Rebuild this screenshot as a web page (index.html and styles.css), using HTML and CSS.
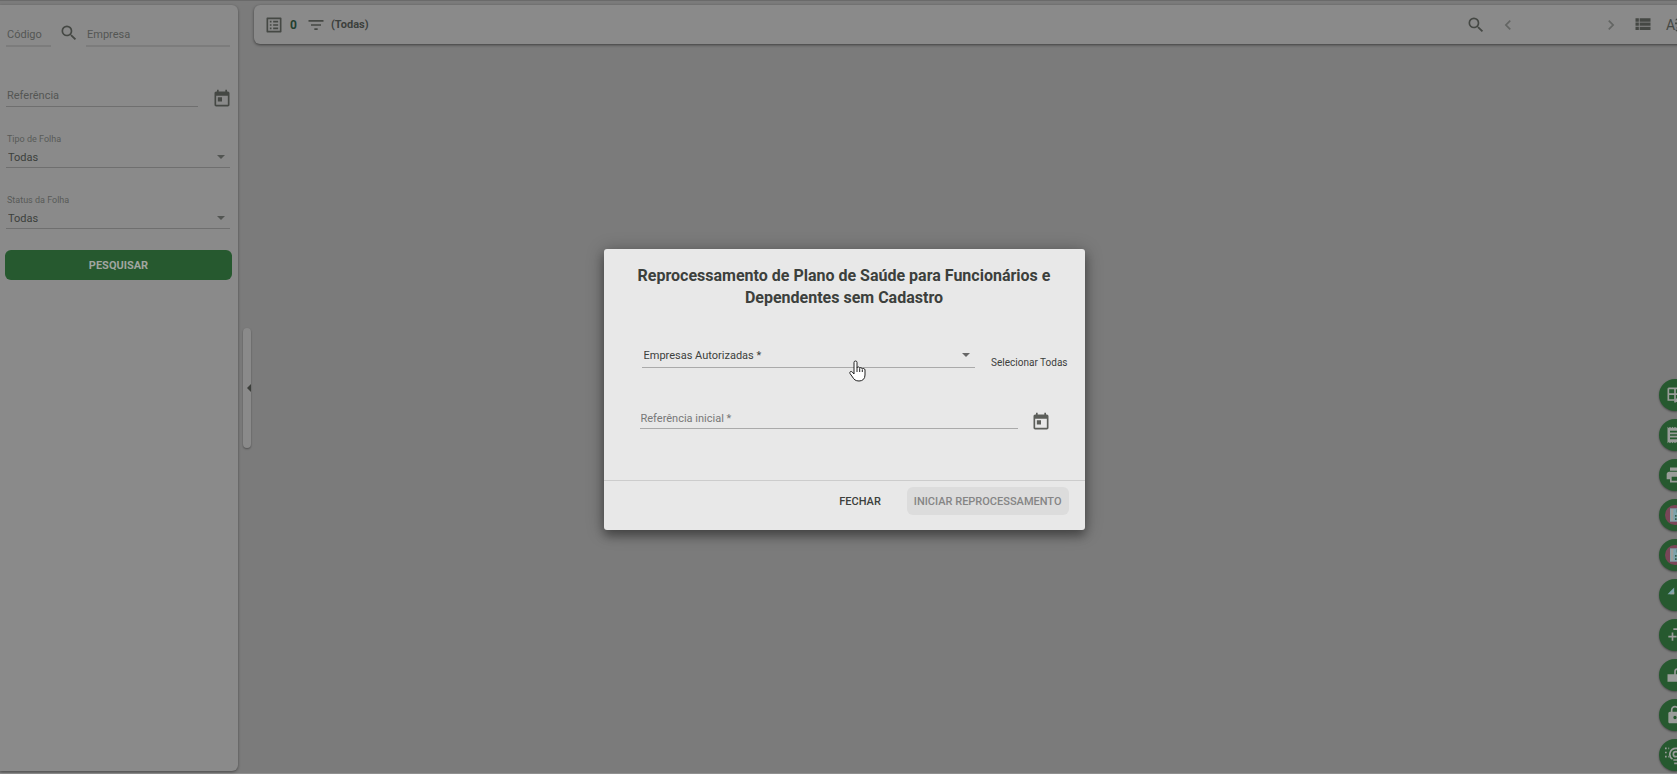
FILE: index.html
```html
<!DOCTYPE html>
<html lang="pt-BR">
<head>
  <meta charset="UTF-8" />
  <meta name="viewport" content="width=device-width, initial-scale=1.0" />
  <title>Folha de Pagamento</title>
  <link rel="stylesheet" href="styles.css">
</head>
<body>
  <svg class="sprite" aria-hidden="true">
    <symbol id="i-search" viewBox="0 0 24 24"><path d="M15.5 14h-.79l-.28-.27A6.47 6.47 0 0 0 16 9.5 6.5 6.5 0 1 0 9.5 16c1.61 0 3.09-.59 4.23-1.57l.27.28v.79l5 4.99L20.49 19l-4.99-5zm-6 0C7.01 14 5 11.99 5 9.5S7.01 5 9.5 5 14 7.01 14 9.5 11.99 14 9.5 14z"/></symbol>
    <symbol id="i-today" viewBox="0 0 24 24"><path d="M19 3h-1V1h-2v2H8V1H6v2H5c-1.11 0-1.99.9-1.99 2L3 19c0 1.1.89 2 2 2h14c1.1 0 2-.9 2-2V5c0-1.1-.9-2-2-2zm0 16H5V8h14v11zM7 10h5v5H7z"/></symbol>
    <symbol id="i-report" viewBox="0 0 24 24"><circle class="rose" cx="12" cy="12" r="12"/><path class="tint" d="M6 4h12v16H6z"/><path class="shade" d="M14 5h4v4h-4z"/><path d="M7 5h3v14H7z"/><path class="shade" d="M12 12h2v2h-2zM12 16h2v2h-2zM16 12h2v2h-2z"/></symbol>
  </svg>

  <div class="app">
    <form class="sidebar">
      <div class="row row-first">
        <input class="field code" type="text" placeholder="Código" aria-label="Código">
        <button class="icon-btn" type="button" aria-label="Buscar empresa"><svg><use href="#i-search"/></svg></button>
        <input class="field grow" type="text" placeholder="Empresa" aria-label="Empresa">
      </div>
      <div class="row">
        <input class="field line grow" type="text" placeholder="Referência" aria-label="Referência">
        <button class="icon-btn calendar" type="button" aria-label="Abrir calendário"><svg><use href="#i-today"/></svg></button>
      </div>
      <div class="group">
        <label for="tipo">Tipo de Folha</label>
        <div class="select"><select id="tipo"><option>Todas</option></select></div>
      </div>
      <div class="group">
        <label for="status">Status da Folha</label>
        <div class="select"><select id="status"><option>Todas</option></select></div>
      </div>
      <button class="btn-search" type="submit">PESQUISAR</button>
    </form>

    <main class="content">
      <header class="toolbar">
        <svg class="icon" viewBox="0 0 24 24"><path d="M19 5v14H5V5h14m1.1-2H3.9c-.5 0-.9.4-.9.9v16.2c0 .4.4.9.9.9h16.2c.4 0 .9-.5.9-.9V3.900c0-.5-.5-.9-.9-.9zM11 7h6v2h-6V7zm0 4h6v2h-6v-2zm0 4h6v2h-6zM7 7h2v2H7zm0 4h2v2H7zm0 4h2v2H7z"/></svg>
        <strong class="count">0</strong>
        <button class="icon-btn" type="button" aria-label="Filtrar"><svg viewBox="0 0 24 24"><path d="M10 18h4v-2h-4v2zM3 6v2h18V6H3zm3 7h12v-2H6v2z"/></svg></button>
        <strong class="filter">(Todas)</strong>
        <div class="tools">
          <button class="icon-btn" type="button" aria-label="Pesquisar"><svg><use href="#i-search"/></svg></button>
          <div class="pager">
            <button class="icon-btn" type="button" aria-label="Anterior"><svg viewBox="0 0 24 24"><path d="M15.410 7.410L14 6l-6 6 6 6 1.410-1.410L10.830 12z"/></svg></button>
            <button class="icon-btn" type="button" aria-label="Próxima"><svg viewBox="0 0 24 24"><path d="M10 6L8.590 7.410 13.170 12l-4.580 4.590L10 18l6-6z"/></svg></button>
          </div>
          <button class="icon-btn" type="button" aria-label="Lista"><svg viewBox="0 0 24 24"><path d="M3 4h4v4H3zM3 9h4v4H3zM3 14h4v4H3zM8 4h13v4H8zM8 9h13v4H8zM8 14h13v4H8z"/></svg></button>
          <button class="sort" type="button" aria-label="Ordenar">A<svg viewBox="0 0 12 20"><path d="M1 4l3-3 3 3zM1 16l3 3 3-3zM1 7h9v2l-6 5H2l6-5H1z"/></svg></button>
        </div>
      </header>
    </main>

    <button class="handle" type="button" aria-label="Recolher painel"></button>

    <nav class="fabs" aria-label="Ações">
      <button type="button" aria-label="Editar tabela"><svg viewBox="0 0 24 24"><path fill="none" stroke="currentColor" stroke-width="2" d="M4 4h17v6M4 4v14h8M4 11h13M12 4v14"/><path d="M11 19l7-7 2 2-7 7h-2z"/></svg></button>
      <button type="button" aria-label="Recibo"><svg viewBox="0 0 24 24"><path d="M18 17H6v-2h12v2zm0-4H6v-2h12v2zm0-4H6V7h12v2zM3 22l1.500-1.500L6 22l1.500-1.500L9 22l1.500-1.500L12 22l1.500-1.500L15 22l1.500-1.500L18 22l1.500-1.500L21 22V2l-1.500 1.500L18 2l-1.500 1.500L15 2l-1.500 1.500L12 2l-1.500 1.500L9 2 7.500 3.500 6 2 4.500 3.500 3 2v20z"/></svg></button>
      <button type="button" aria-label="Imprimir"><svg viewBox="0 0 24 24"><path d="M19 8H5c-1.660 0-3 1.340-3 3v6h4v4h12v-4h4v-6c0-1.660-1.340-3-3-3zm-3 11H8v-5h8v5zm2-16H6v4h12V3z"/></svg></button>
      <button type="button" aria-label="Relatório de folha"><svg><use href="#i-report"/></svg></button>
      <button type="button" aria-label="Relatório de encargos"><svg><use href="#i-report"/></svg></button>
      <button type="button" aria-label="Enviar"><svg viewBox="0 0 24 24"><path class="tint" d="M3 11L11 3v8z"/><path d="M6 11l5-3v3z"/></svg></button>
      <button type="button" aria-label="Adicionar"><svg viewBox="0 0 24 24"><path d="M8 9h2v4h4v2h-4v4H8v-4H4v-2h4zM10 4h12v2H10z"/></svg></button>
      <button type="button" aria-label="Abrir folha"><svg viewBox="0 0 24 24"><path d="M3 11h8V8a4 4 0 0 1 8 0h-2a2 2 0 0 0-4 0v3h5v9H3z"/></svg></button>
      <button type="button" aria-label="Fechar folha"><svg viewBox="0 0 24 24"><path d="M18 8h-1V6c0-2.760-2.240-5-5-5S7 3.240 7 6v2H6c-1.100 0-2 .9-2 2v10c0 1.100.9 2 2 2h12c1.100 0 2-.9 2-2V10c0-1.100-.9-2-2-2zm-6 9a2 2 0 1 1 0-4 2 2 0 0 1 0 4zM15 8H9V6a3 3 0 0 1 6 0z"/></svg></button>
      <button type="button" aria-label="Processar"><svg viewBox="0 0 24 24"><g fill="none" stroke="currentColor" stroke-width="2"><path d="M9 17C3 13 6 4 13 4s10 9 4 13M10 18h6M11 22h4"/><circle cx="13" cy="11" r="3"/><path stroke-dasharray="2 2" d="M0 4h5M0 9h4M0 14h5"/></g></svg></button>
    </nav>

    <div class="overlay">
      <form class="dialog" role="dialog" aria-labelledby="dialogTitle">
        <h1 id="dialogTitle">Reprocessamento de Plano de Saúde para Funcionários e Dependentes sem Cadastro</h1>
        <div class="dialog-body">
          <div class="dialog-row companies">
            <div class="select grow"><select aria-label="Empresas Autorizadas" required><option value="">Empresas Autorizadas *</option></select></div>
            <button class="select-all" type="button">Selecionar Todas</button>
          </div>
          <div class="dialog-row reference">
            <input class="field line grow" type="text" placeholder="Referência inicial *" aria-label="Referência inicial" required>
            <button class="icon-btn calendar" type="button" aria-label="Abrir calendário"><svg><use href="#i-today"/></svg></button>
          </div>
        </div>
        <div class="dialog-actions">
          <button class="btn-close" type="button">FECHAR</button>
          <button class="btn-start" type="submit" disabled>INICIAR REPROCESSAMENTO</button>
        </div>
        <svg class="pointer" viewBox="0 0 17 22" aria-hidden="true"><path d="M5 12V2.500a1.500 1.500 0 0 1 3 0V8c0-1.500 2.500-1.500 2.700.3C11 7.200 13 7.500 13.200 9c.6-1 2.800-.6 2.800 1v5c0 4-2.500 6-6 6-3.500 0-5-1.500-6.500-4L1 13.500c-.8-1.700 1-2.800 2.300-1.500L5 14z"/><path d="M8 8v4M10.700 8.500V12M13.300 9.500V12"/></svg>
      </form>
    </div>
  </div>
</body>
</html>
```
FILE: styles.css
```css
* { box-sizing: border-box; }
html, body { height: 100%; }
body { margin: 0; overflow: hidden; background: #7b7b7b; color: #3c403c; font-family: Roboto, Arial, sans-serif; font-size: 11px; }
button, input, select { margin: 0; padding: 0; border: none; border-radius: 0; background: none; color: inherit; font: inherit; outline: none; }
button { cursor: pointer; }
.sprite { position: absolute; width: 0; height: 0; }

/* the page is a little wider than the window */
.app { position: relative; display: flex; gap: 16px; width: calc(100% + 11px); height: 100%; padding: 4px 0 2px; border-top: 1px solid #6a6a6a; border-bottom: 1px solid #909090; }

.sidebar { width: 238px; padding: 0 8px 0 6px; background: #8a8a8a; border-radius: 0 6px 6px 0; box-shadow: 0 1px 3px rgba(0,0,0,0.4); }
.row { display: flex; align-items: flex-end; height: 60px; }
.row-first { height: 42px; }
.row-first .icon-btn { margin: 0 7px 4px 8px; }
.field { min-width: 0; height: 24px; padding: 0 1px; border-bottom: 2px solid #7c7c7c; }
.field.line { height: 22px; border-bottom: 1px solid #6f6f6f; }
.field::placeholder { color: #545654; opacity: 1; }
.code { width: 45px; }
.grow { flex: 1; }
.icon-btn { flex: none; width: 20px; height: 20px; color: #454844; }
.icon-btn svg, .icon { display: block; width: 20px; height: 20px; fill: currentColor; }
.row .calendar { margin: 0 -2px -2px 14px; }
.group { padding-top: 24px; }
.group label { display: block; height: 16px; padding-left: 1px; color: #585a58; font-size: 9px; line-height: 16px; }
.select { position: relative; border-bottom: 1px solid #6f6f6f; }
.select select { display: block; width: 100%; height: 20px; padding: 0 2px; appearance: none; }
.select::after { content: ""; position: absolute; right: 5px; top: 8px; border: 4px solid transparent; border-top-color: #525552; border-bottom: none; pointer-events: none; }
.btn-search { display: block; width: 227px; height: 30px; margin: 21px 0 0 -1px; border-radius: 6px; background: #26592f; color: #a0a5a0; font-weight: 700; }

.content { flex: 1; min-width: 0; }
.toolbar { display: flex; align-items: center; height: 39px; padding: 0 2px 0 10px; border-radius: 6px 0 0 6px; background: #8a8a8a; box-shadow: 0 1px 3px rgba(0,0,0,0.5); }
.toolbar .icon { color: #454844; }
.count { width: 22px; padding-left: 6px; color: #22402f; font-size: 12px; }
.filter { padding-left: 5px; }
.tools { display: flex; align-items: center; margin-left: auto; }
.pager { display: flex; justify-content: space-between; width: 123px; margin: 0 12px; }
.pager .icon-btn { color: #636563; }
.sort { display: flex; align-items: center; width: 20px; margin-left: 13px; color: #454844; font-size: 14px; }
.sort svg { flex: none; width: 10px; height: 16px; margin-left: -1px; fill: currentColor; }

.handle { position: absolute; left: 243px; top: 327px; width: 8px; height: 120px; border-radius: 4px; background: #8a8a8a; box-shadow: 0 1px 2px rgba(0,0,0,0.35); }
.handle::before { content: ""; display: block; margin: 0 auto; width: 4px; border: 4px solid transparent; border-right-color: #3c3f3b; border-left: none; }

.fabs { position: absolute; right: -3px; bottom: 2px; display: flex; flex-direction: column; gap: 8px; }
.fabs button { display: flex; align-items: center; justify-content: center; width: 32px; height: 32px; border-radius: 50%; background: #26592f; color: #9a9d9a; box-shadow: 0 1px 2px rgba(0,0,0,0.4); }
.fabs svg { width: 20px; height: 20px; fill: currentColor; }
.rose { fill: #794658; }
.tint { fill: #7da3ab; }
.shade { fill: #335d4b; }

.overlay { position: absolute; inset: 5px 0 0; display: flex; align-items: center; justify-content: center; pointer-events: none; }
.dialog { position: relative; width: 481px; border-radius: 3px; background: #e8e8e8; box-shadow: 0 6px 10px rgba(0,0,0,0.3), 0 2px 18px rgba(0,0,0,0.3); pointer-events: auto; }
.dialog h1 { margin: 0; padding: 16px 32px 0; color: #3c403c; font-size: 16px; font-weight: 700; line-height: 22px; text-align: center; }
.dialog-body { height: 171px; padding: 34px 17px 0 36px; }
.dialog-row { display: flex; align-items: flex-end; }
.companies { padding-left: 2px; }
.companies .select { border-color: #aaa; }
.companies .select select { height: 24px; }
.companies .select::after { top: 10px; border-top-color: #666; }
.select-all { height: 10px; margin-left: 16px; font-size: 10px; line-height: 10px; }
.reference { margin-top: 41px; }
.reference .field { height: 20px; border-color: #aaa; }
.reference .field::placeholder { color: #777; }
.reference .calendar { margin: 0 17px -3px 13px; color: #5c5e5a; }
.dialog-actions { display: flex; justify-content: flex-end; padding: 6px 16px 15px; border-top: 1px solid #ccc; font-weight: 500; }
.dialog-actions button { height: 28px; border-radius: 6px; }
.btn-close { margin-right: 26px; }
.btn-start { padding: 0 7px; background: #dcdcdc; color: #858585; }
.pointer { position: absolute; left: 245px; top: 111px; width: 17px; height: 22px; fill: #fff; stroke: #222; stroke-width: 1; pointer-events: none; }
```
